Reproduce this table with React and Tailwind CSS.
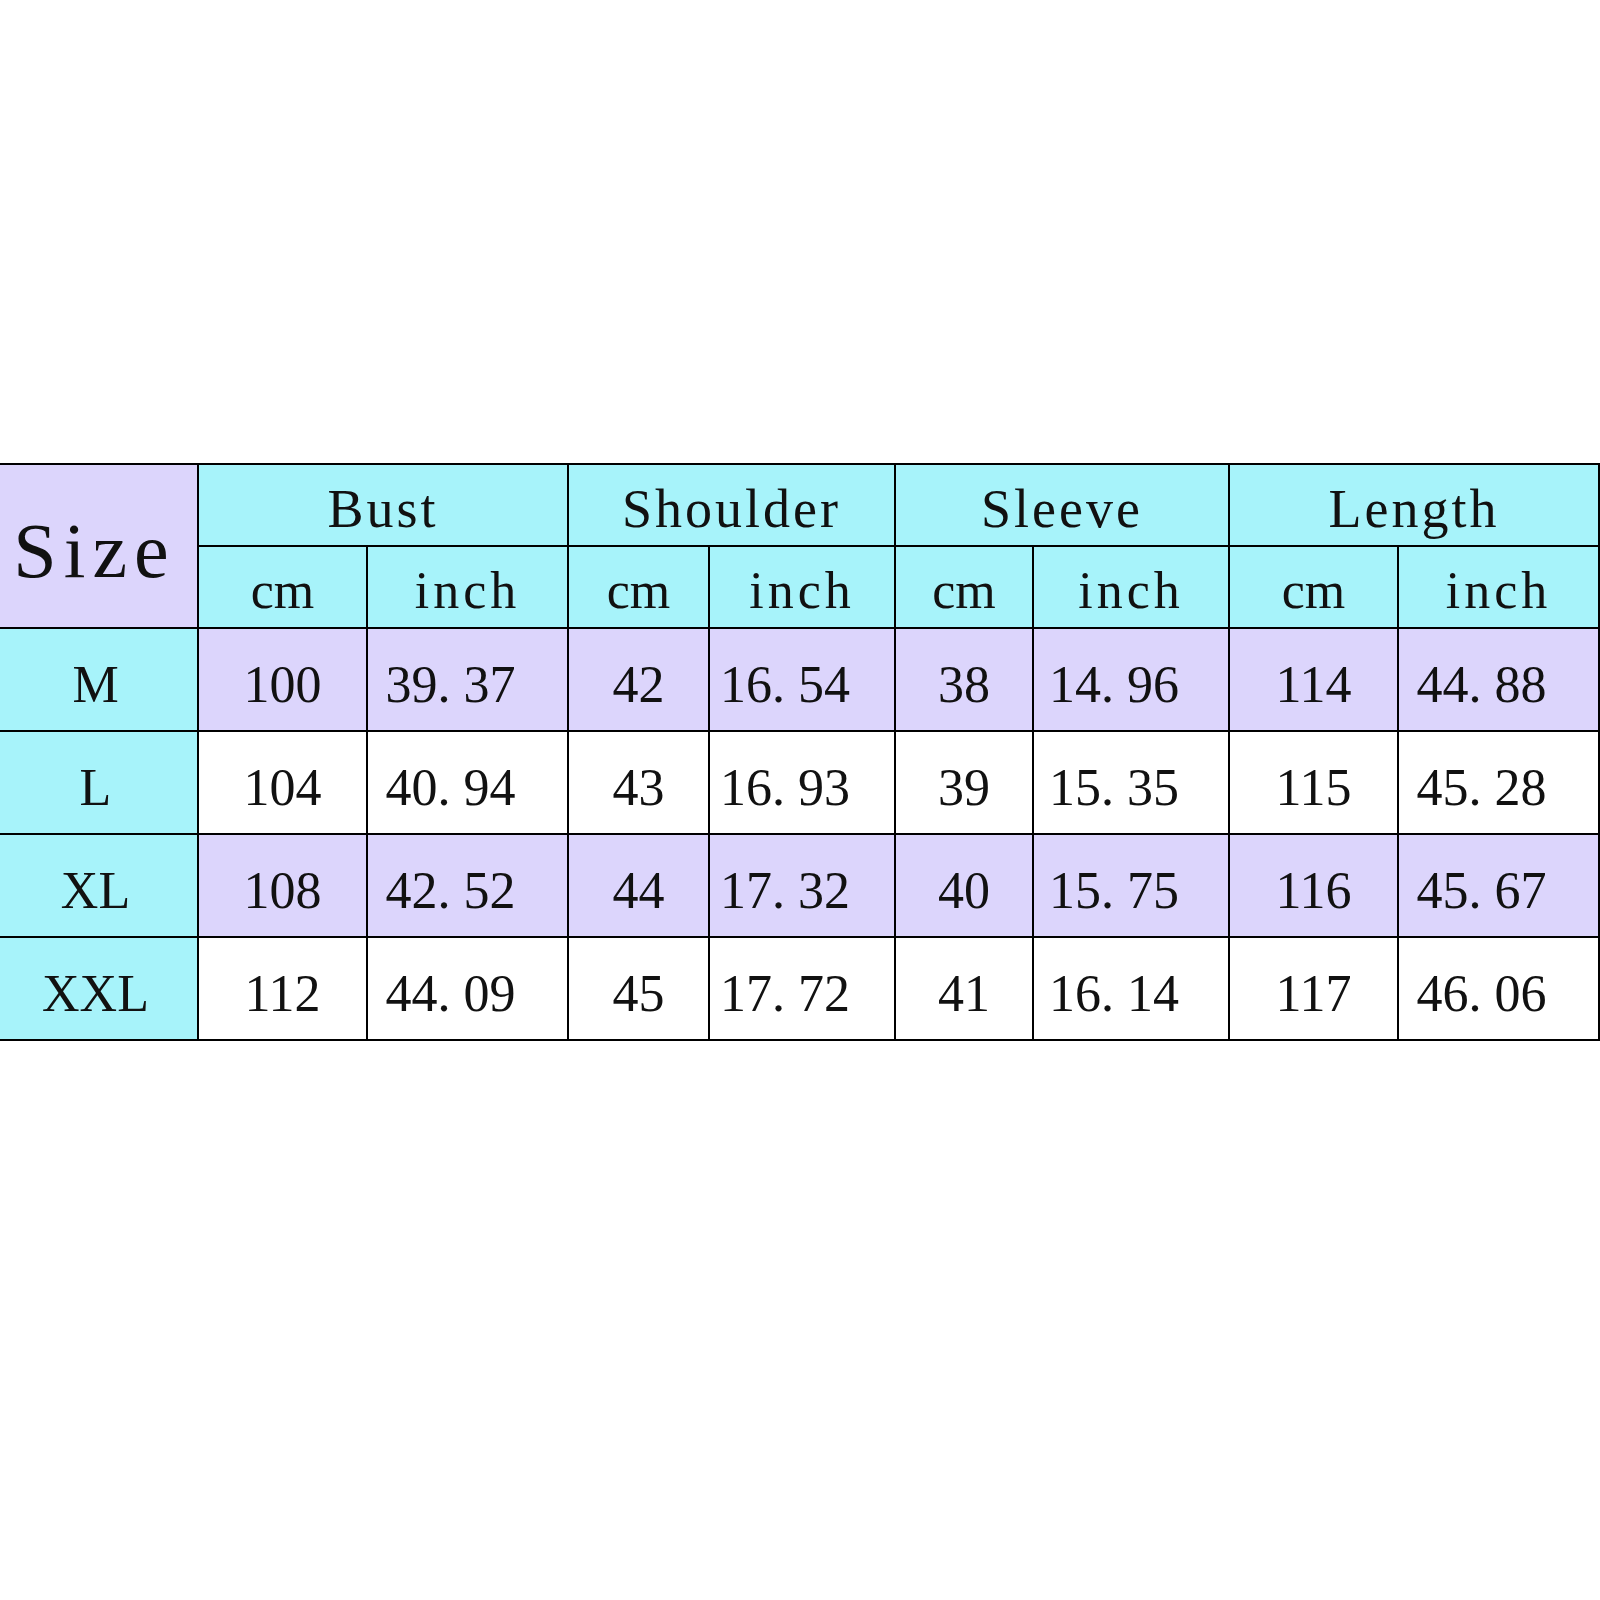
import React from "react";

const LAV = "bg-[#dcd5fc]";
const CYAN = "bg-[#a7f3fa]";

const rows = [
  ["M", "100", "39. 37", "42", "16. 54", "38", "14. 96", "114", "44. 88"],
  ["L", "104", "40. 94", "43", "16. 93", "39", "15. 35", "115", "45. 28"],
  ["XL", "108", "42. 52", "44", "17. 32", "40", "15. 75", "116", "45. 67"],
  ["XXL", "112", "44. 09", "45", "17. 72", "41", "16. 14", "117", "46. 06"],
];

const groups = ["Bust", "Shoulder", "Sleeve", "Length"];

export default function App() {
  return (
    <div
      className="w-[1600px] h-[1600px] bg-white text-[#111]"
      style={{ fontFamily: '"Liberation Serif", "Times New Roman", serif' }}
    >
      <div className="pt-[463px]">
        <div className="grid grid-cols-[197px_167px_199px_139px_184px_136px_194px_167px_199px] grid-rows-[80px_80px_101px_101px_101px_101px] gap-[2px] bg-black border-t-2 border-r-2 border-b-2 border-black w-[1600px]">
          <div className={`${LAV} row-span-2 flex items-center justify-center pr-[8px] pt-[10px] text-[78px] leading-none tracking-[7px]`}>
            Size
          </div>
          {groups.map((g) => (
            <div
              key={g}
              className={`${CYAN} col-span-2 flex items-center justify-center text-[54px] leading-none tracking-[3px] pt-[8px]`}
            >
              {g}
            </div>
          ))}
          {groups.map((g) => (
            <React.Fragment key={g + "u"}>
              <div className={`${CYAN} flex items-center justify-center text-[52px] leading-none pt-[8px]`}>
                cm
              </div>
              <div className={`${CYAN} flex items-center justify-center text-[52px] leading-none tracking-[4px] pt-[8px]`}>
                inch
              </div>
            </React.Fragment>
          ))}
          {rows.map((r, ri) => {
            const rowBg = ri % 2 === 0 ? LAV : "bg-white";
            return (
              <React.Fragment key={r[0]}>
                <div className={`${CYAN} flex items-center justify-center text-[52px] leading-none pt-[10px] pr-[6px]`}>
                  {r[0]}
                </div>
                {r.slice(1).map((v, ci) => (
                  <div
                    key={ci}
                    className={`${rowBg} flex items-center justify-center text-[52px] leading-none pt-[10px] whitespace-pre ${
                      ci % 2 === 1 ? "pr-[34px]" : ""
                    }`}
                  >
                    {v}
                  </div>
                ))}
              </React.Fragment>
            );
          })}
        </div>
      </div>
    </div>
  );
}
